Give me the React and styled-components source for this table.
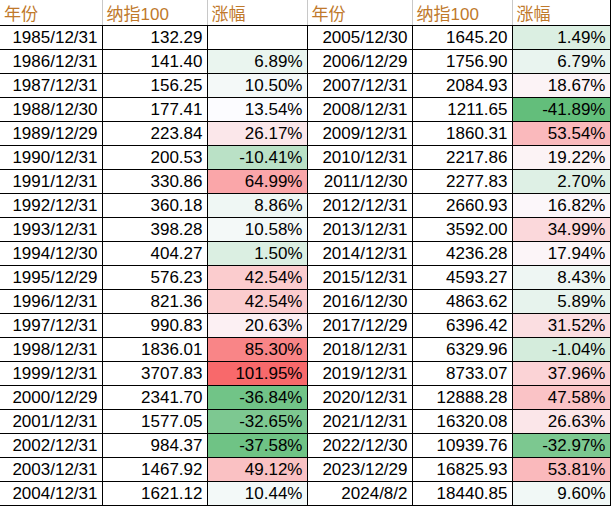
import React from 'react'
import styled, { createGlobalStyle } from 'styled-components'

const GlobalStyle = createGlobalStyle`
  html, body {
    margin: 0;
    padding: 0;
    background: #ffffff;
  }
`

const rows = [
  ['1985/12/31', '132.29', null, '2005/12/30', '1645.20', 1.49],
  ['1986/12/31', '141.40', 6.89, '2006/12/29', '1756.90', 6.79],
  ['1987/12/31', '156.25', 10.5, '2007/12/31', '2084.93', 18.67],
  ['1988/12/30', '177.41', 13.54, '2008/12/31', '1211.65', -41.89],
  ['1989/12/29', '223.84', 26.17, '2009/12/31', '1860.31', 53.54],
  ['1990/12/31', '200.53', -10.41, '2010/12/31', '2217.86', 19.22],
  ['1991/12/31', '330.86', 64.99, '2011/12/30', '2277.83', 2.7],
  ['1992/12/31', '360.18', 8.86, '2012/12/31', '2660.93', 16.82],
  ['1993/12/31', '398.28', 10.58, '2013/12/31', '3592.00', 34.99],
  ['1994/12/30', '404.27', 1.5, '2014/12/31', '4236.28', 17.94],
  ['1995/12/29', '576.23', 42.54, '2015/12/31', '4593.27', 8.43],
  ['1996/12/31', '821.36', 42.54, '2016/12/30', '4863.62', 5.89],
  ['1997/12/31', '990.83', 20.63, '2017/12/29', '6396.42', 31.52],
  ['1998/12/31', '1836.01', 85.3, '2018/12/31', '6329.96', -1.04],
  ['1999/12/31', '3707.83', 101.95, '2019/12/31', '8733.07', 37.96],
  ['2000/12/29', '2341.70', -36.84, '2020/12/31', '12888.28', 47.58],
  ['2001/12/31', '1577.05', -32.65, '2021/12/31', '16320.08', 26.63],
  ['2002/12/31', '984.37', -37.58, '2022/12/30', '10939.76', -32.97],
  ['2003/12/31', '1467.92', 49.12, '2023/12/29', '16825.93', 53.81],
  ['2004/12/31', '1621.12', 10.44, '2024/8/2', '18440.85', 9.6],
]

// excel style 3-colour scale: green min, white median, red max
const allChanges = rows
  .flatMap(r => [r[2], r[5]])
  .filter(v => v !== null)
  .sort((a, b) => a - b)
const minV = allChanges[0]
const maxV = allChanges[allChanges.length - 1]
const midV = allChanges[Math.floor(allChanges.length / 2)]

const GREEN = [99, 190, 123]
const WHITE = [252, 252, 255]
const RED = [248, 105, 107]

const mix = (a, b, t) => a.map((c, i) => Math.round(c + (b[i] - c) * t))

const scaleColor = v => {
  if (v === null) return '#ffffff'
  const rgb =
    v <= midV ? mix(WHITE, GREEN, (midV - v) / (midV - minV)) : mix(WHITE, RED, (v - midV) / (maxV - midV))
  return `rgb(${rgb.join(',')})`
}

const fmt = v => (v === null ? '' : `${v.toFixed(2)}%`)

const Sheet = styled.table`
  border-collapse: collapse;
  table-layout: fixed;
  width: 610px;
  font-family: 'Liberation Sans', 'Noto Sans CJK SC', sans-serif;
  font-size: 17px;
  color: #000;
`

const HeadCell = styled.th`
  height: 23px;
  padding: 0 4px;
  text-align: left;
  font-weight: normal;
  color: #c0792b;
  border-left: 1px solid #c8c8c8;
  border-right: 1px solid #c8c8c8;
  border-bottom: 1px solid #000;
  white-space: nowrap;
  &:first-child {
    border-left: none;
  }
  &:last-child {
    border-right: 1px solid #000;
  }
`

const Cell = styled.td`
  height: 23px;
  padding: 0 4px 0 0;
  text-align: right;
  border: 1px solid #000;
  background: ${p => p.$bg || '#fff'};
  white-space: nowrap;
  line-height: 23px;
  &:first-child {
    border-left: none;
  }
`

const headers = ['年份', '纳指100', '涨幅', '年份', '纳指100', '涨幅']
const widths = [102, 105, 100, 105, 100, 98]

export default function App() {
  return (
    <>
      <GlobalStyle />
      <Sheet>
        <colgroup>
          {widths.map((w, i) => (
            <col key={i} style={{ width: w }} />
          ))}
        </colgroup>
        <thead>
          <tr>
            {headers.map((h, i) => (
              <HeadCell key={i}>{h}</HeadCell>
            ))}
          </tr>
        </thead>
        <tbody>
          {rows.map(r => (
            <tr key={r[0]}>
              <Cell>{r[0]}</Cell>
              <Cell>{r[1]}</Cell>
              <Cell $bg={scaleColor(r[2])}>{fmt(r[2])}</Cell>
              <Cell>{r[3]}</Cell>
              <Cell>{r[4]}</Cell>
              <Cell $bg={scaleColor(r[5])}>{fmt(r[5])}</Cell>
            </tr>
          ))}
        </tbody>
      </Sheet>
    </>
  )
}
